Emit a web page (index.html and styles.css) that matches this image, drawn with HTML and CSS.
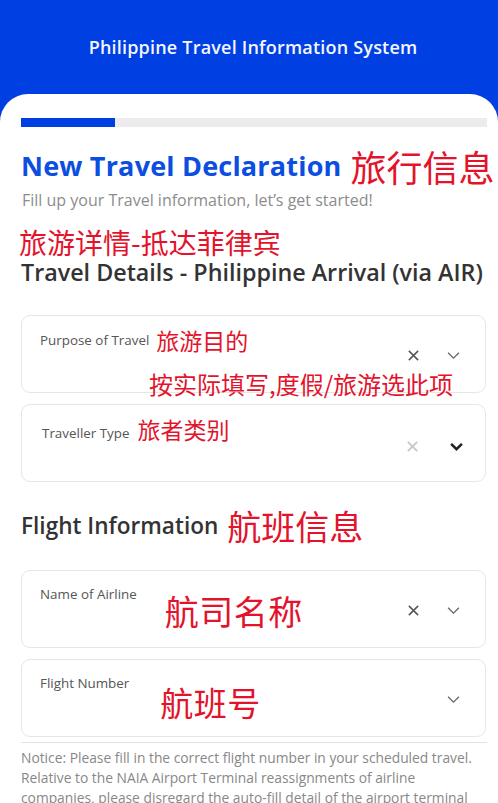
FILE: index.html
```html
<!DOCTYPE html>
<html lang="en">
<head>
<meta charset="utf-8">
<title>Philippine Travel Information System</title>
<link rel="stylesheet" href="styles.css">
</head>
<body>
<header class="topbar">
  <h1 class="app-title">Philippine Travel Information System</h1>
</header>
<main class="card">
  <div class="progress"><div class="progress-fill"></div></div>

  <div class="heading-row">
    <h2 class="page-title">New Travel Declaration</h2>
    <span class="cn cn-title">旅行信息</span>
  </div>
  <p class="subtitle">Fill up your Travel information, let’s get started!</p>

  <div class="cn cn-section">旅游详情-抵达菲律宾</div>
  <h3 class="section-title">Travel Details - Philippine Arrival (via AIR)</h3>

  <div class="field field-purpose">
    <div class="field-main">
      <span class="field-label">Purpose of Travel</span>
      <span class="cn cn-label">旅游目的</span>
    </div>
    <div class="field-icons">
      <svg class="ico-x" viewBox="0 0 14 14"><path d="M2 2 L12 12 M12 2 L2 12"/></svg>
      <svg class="ico-chev" viewBox="0 0 16 10"><path d="M2 2 L8 8 L14 2"/></svg>
    </div>
    <div class="cn cn-note">按实际填写,度假/旅游选此项</div>
  </div>

  <div class="field field-traveller">
    <div class="field-main">
      <span class="field-label">Traveller Type</span>
      <span class="cn cn-label">旅者类别</span>
    </div>
    <div class="field-icons">
      <svg class="ico-x light" viewBox="0 0 14 14"><path d="M2 2 L12 12 M12 2 L2 12"/></svg>
      <svg class="ico-chev bold" viewBox="0 0 16 10"><path d="M2 2 L8 8 L14 2"/></svg>
    </div>
  </div>

  <div class="heading-row flight-row">
    <h3 class="section-title flight-title">Flight Information</h3>
    <span class="cn cn-flight">航班信息</span>
  </div>

  <div class="field field-airline">
    <div class="field-main">
      <span class="field-label">Name of Airline</span>
      <span class="cn cn-big">航司名称</span>
    </div>
    <div class="field-icons">
      <svg class="ico-x" viewBox="0 0 14 14"><path d="M2 2 L12 12 M12 2 L2 12"/></svg>
      <svg class="ico-chev" viewBox="0 0 16 10"><path d="M2 2 L8 8 L14 2"/></svg>
    </div>
  </div>

  <div class="field field-number">
    <div class="field-main">
      <span class="field-label">Flight Number</span>
      <span class="cn cn-big cn-number">航班号</span>
    </div>
    <div class="field-icons">
      <svg class="ico-chev" viewBox="0 0 16 10"><path d="M2 2 L8 8 L14 2"/></svg>
    </div>
  </div>

  <hr class="divider">
  <p class="notice">Notice: Please fill in the correct flight number in your scheduled travel. Relative to the NAIA Airport Terminal reassignments of airline companies, please disregard the auto-fill detail of the airport terminal</p>
</main>
</body>
</html>
```

FILE: styles.css
```css
* { box-sizing: border-box; }
html, body {
  margin: 0;
  padding: 0;
  background: #0040e3;
  font-family: "Open Sans", "Noto Sans CJK SC", sans-serif;
  overflow: hidden;
}
.topbar {
  height: 94px;
  background: #0040e3;
  display: flex;
  justify-content: center;
  align-items: flex-start;
  padding-top: 35px;
}
.app-title {
  margin: 0 0 0 8px;
  color: #f4f6ff;
  font-size: 18px;
  line-height: 24px;
  font-weight: 600;
  letter-spacing: 0.2px;
}
.card {
  background: #fff;
  border-radius: 28px 28px 0 0;
  padding: 24px 11px 0 21px;
  min-height: 709px;
}
.progress {
  height: 9px;
  background: #ececec;
  width: 466px;
}
.progress-fill {
  width: 94px;
  height: 100%;
  background: #0040e3;
}
.heading-row {
  display: flex;
  align-items: center;
  gap: 9px;
  height: 40px;
  margin-top: 19px;
  white-space: nowrap;
}
.page-title {
  margin: 0;
  font-size: 27px;
  line-height: 40px;
  font-weight: 700;
  color: #0b4ee0;
  letter-spacing: 0.2px;
}
.cn {
  font-family: "Noto Sans CJK SC", sans-serif;
  color: #e3132c;
  font-weight: 400;
  white-space: nowrap;
}
.cn-title { font-size: 36px; line-height: 40px; }
.subtitle {
  margin: 4px 0 0 1px;
  font-size: 16px;
  line-height: 20px;
  color: #8c8c8c;
  white-space: nowrap;
}
.cn-section {
  margin-top: 18px;
  font-size: 28px;
  line-height: 28px;
  margin-left: -2px;
}
.section-title {
  margin: 2px 0 0 0;
  font-size: 23.3px;
  font-weight: 600;
  color: #333;
  line-height: 28px;
  white-space: nowrap;
}
.field {
  position: relative;
  width: 465px;
  height: 78px;
  border: 1px solid #e6e6e6;
  border-radius: 9px;
  padding: 0 24px 0 18px;
  display: flex;
  align-items: center;
}
.field-purpose { margin-top: 29px; }
.field-traveller { margin-top: 11px; }
.field-main {
  align-self: flex-start;
  display: flex;
  align-items: center;
  gap: 7px;
  height: 24px;
  margin-top: 12px;
}
.field-label {
  font-size: 13.4px;
  color: #555;
  white-space: nowrap;
}
.cn-label { font-size: 23px; line-height: 24px; }
.field-traveller .field-main { margin-top: 16px; padding-left: 2px; gap: 8px; }
.field-traveller .cn-label { margin-top: -8px; }
.field-icons {
  margin-left: auto;
  display: flex;
  align-items: center;
  gap: 26px;
  margin-top: 2px;
}
.ico-x {
  width: 13px;
  height: 13px;
  fill: none;
  stroke: #555;
  stroke-width: 1.6;
}
.ico-x.light { stroke: #c8c8c8; stroke-width: 2; }
.ico-chev {
  width: 15px;
  height: 9px;
  fill: none;
  stroke: #666;
  stroke-width: 1.4;
}
.ico-chev.bold { stroke: #222; stroke-width: 2.8; }
.field-traveller .field-icons { gap: 30px; margin-right: -3px; margin-top: 6px; }
.cn-note {
  position: absolute;
  left: 127px;
  top: 54px;
  font-size: 24px;
  line-height: 28px;
}
.flight-row { margin-top: 24px; gap: 9px; }
.flight-title { margin: 0; font-size: 22.6px; }
.cn-flight { font-size: 34px; line-height: 40px; }
.field-airline { margin-top: 24px; }
.field-number { margin-top: 11px; }
.field-airline .field-main, .field-number .field-main { align-items: flex-start; height: auto; margin-top: 14px; }
.cn-big {
  font-size: 34px;
  line-height: 40px;
  margin-left: 21px;
  margin-top: 6px;
  letter-spacing: 0.5px;
}
.cn-number { margin-left: 24px; margin-top: 8px; font-size: 33px; }
.divider {
  width: 466px;
  margin: 5px 0 0 0;
  border: 0;
  border-top: 1px solid #e2e2e2;
}
.notice {
  margin: 5px 0 0 0;
  font-size: 13.8px;
  line-height: 20px;
  color: #888;
}
```
